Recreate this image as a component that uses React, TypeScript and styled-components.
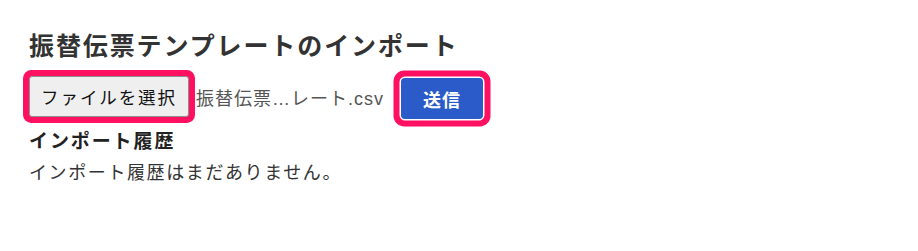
import React from 'react';
import styled, { createGlobalStyle } from 'styled-components';

const GlobalStyle = createGlobalStyle`
  html, body {
    margin: 0;
    padding: 0;
    background: #ffffff;
  }
  body {
    font-family: "Noto Sans CJK JP", "Noto Sans", sans-serif;
    color: #333333;
  }
`;

const PINK = '#ff1060';

const Page = styled.main`
  padding: 28px 29px 0;
  width: 918px;
  height: 251px;
  box-sizing: border-box;
`;

const Title = styled.h2`
  margin: 0;
  font-size: 25px;
  line-height: 32px;
  letter-spacing: 1.9px;
  font-weight: 700;
  color: #333333;
`;

const UploadRow = styled.div`
  display: flex;
  align-items: flex-start;
  margin-top: 16px;
`;

const FileButton = styled.button`
  height: 41px;
  width: 160px;
  padding: 0;
  font-family: inherit;
  font-size: 17.5px;
  letter-spacing: 1.9px;
  color: #111111;
  background: #efefef;
  border: 1px solid #8f8f8f;
  border-radius: 3px;
  box-shadow: 0 0 0 6px ${PINK};
  cursor: pointer;
`;

const FileName = styled.span`
  margin-left: 7px;
  margin-top: 8px;
  font-family: "Liberation Sans", "Noto Sans CJK JP", sans-serif;
  font-size: 18px;
  letter-spacing: 1px;
  color: #555555;
`;

const SendButton = styled.button`
  margin-left: 17px;
  margin-top: 2px;
  width: 82px;
  height: 41px;
  padding: 0;
  font-family: inherit;
  font-size: 18px;
  font-weight: 700;
  letter-spacing: 1px;
  color: #ffffff;
  background: #2b5bc8;
  border: none;
  border-radius: 4px;
  box-shadow: 0 0 0 1.5px #ffffff, 0 0 0 7.5px ${PINK};
  cursor: pointer;
`;

const SectionHeading = styled.h3`
  margin: 8px 0 0;
  font-size: 19px;
  line-height: 26px;
  letter-spacing: 1.9px;
  font-weight: 700;
  color: #222222;
`;

const EmptyText = styled.p`
  margin: 6px 0 0;
  font-size: 18px;
  line-height: 24px;
  letter-spacing: 1.6px;
  color: #333333;
`;

export default function App() {
  return (
    <>
      <GlobalStyle />
      <Page>
        <Title>振替伝票テンプレートのインポート</Title>
        <UploadRow>
          <FileButton type="button">ファイルを選択</FileButton>
          <FileName>振替伝票…レート.csv</FileName>
          <SendButton type="button">送信</SendButton>
        </UploadRow>
        <SectionHeading>インポート履歴</SectionHeading>
        <EmptyText>インポート履歴はまだありません。</EmptyText>
      </Page>
    </>
  );
}
